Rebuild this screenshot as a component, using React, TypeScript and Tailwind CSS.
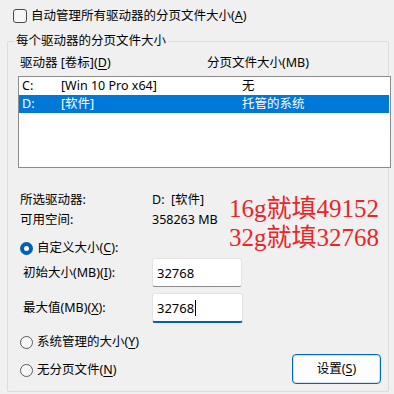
import React from "react";

const ui = { fontFamily: '"Noto Sans", "Noto Sans CJK SC", sans-serif' };
const red = { fontFamily: '"Liberation Serif", "Noto Sans CJK SC", serif' };

function Key({ k }: { k: string }) {
  return (
    <>
      (<span className="underline underline-offset-2">{k}</span>)
    </>
  );
}

function Radio({ checked, children }: { checked?: boolean; children: React.ReactNode }) {
  return (
    <div className="flex h-[20px] items-center gap-[4px]">
      {checked ? (
        <span className="flex h-[13px] w-[13px] items-center justify-center rounded-full bg-[#005fb8]">
          <span className="h-[5px] w-[5px] rounded-full bg-white" />
        </span>
      ) : (
        <span className="h-[13px] w-[13px] rounded-full border border-[#5a5a5a] bg-[#f7f7f7]" />
      )}
      <span>{children}</span>
    </div>
  );
}

export default function App() {
  return (
    <div
      className="relative h-[394px] w-[394px] overflow-hidden bg-[#f0f0f0] text-[12.5px] leading-[16px] text-black"
      style={ui}
    >
      {/* top checkbox */}
      <div className="flex h-[33px] items-center gap-[4px] pb-[1px] pl-[13px]">
        <span className="h-[14px] w-[14px] rounded-[3px] border border-[#4a4a4a] bg-[#f6f6f6]" />
        <span>
          自动管理所有驱动器的分页文件大小<Key k="A" />
        </span>
      </div>

      <fieldset className="ml-[7px] h-[359px] w-[382px] min-w-0 rounded-[2px] border border-[#dcdcdc]">
        <legend className="ml-[6px] px-[2px] leading-[16px]">每个驱动器的分页文件大小</legend>

        <div className="mt-[6px] flex h-[16px] pl-[12px]">
          <span className="w-[187px]">
            驱动器 [卷标]<Key k="D" />
          </span>
          <span>分页文件大小(MB)</span>
        </div>

        <div className="ml-[10px] mt-[5px] h-[92px] w-[373px] border border-[#8b8b8b] bg-white">
          <div className="flex h-[18px] items-center pl-[3px]">
            <span className="w-[39px]">C:</span>
            <span className="w-[181px]">[Win 10 Pro x64]</span>
            <span>无</span>
          </div>
          <div className="mr-[1px] flex h-[18px] items-center bg-[#0078d7] pl-[3px] text-white">
            <span className="w-[39px]">D:</span>
            <span className="w-[181px]">[软件]</span>
            <span>托管的系统</span>
          </div>
        </div>

        <div className="mt-[22px] pl-[12px]">
          <div className="flex h-[20px] items-center">
            <span className="w-[132px]">所选驱动器:</span>
            <span>D:&nbsp;&nbsp;[软件]</span>
          </div>
          <div className="flex h-[20px] items-center">
            <span className="w-[132px]">可用空间:</span>
            <span>358263 MB</span>
          </div>
        </div>

        <div className="mt-[8px] pl-[12px]">
          <Radio checked>
            自定义大小<Key k="C" />:
          </Radio>
        </div>

        <div className="flex h-[29px] items-center pl-[15px]">
          <span className="w-[129px]">
            初始大小(MB)<Key k="I" />:
          </span>
          <div className="flex h-[29px] w-[90px] items-center rounded-[3px] border border-[#e3e3e3] border-b-[#8a8a8a] bg-white pl-[4px] text-[13px]">
            32768
          </div>
        </div>

        <div className="mt-[6px] flex h-[30px] items-center pl-[15px]">
          <span className="w-[129px]">
            最大值(MB)<Key k="X" />:
          </span>
          <div className="flex h-[30px] w-[91px] items-center rounded-[3px] border border-[#e3e3e3] border-b-2 border-b-[#005fb8] bg-white pl-[4px] text-[13px]">
            32768
            <span className="ml-[1px] h-[16px] w-[1px] bg-black" />
          </div>
        </div>

        <div className="mt-[9px] pl-[12px]">
          <Radio>
            系统管理的大小<Key k="Y" />
          </Radio>
        </div>

        <div className="mt-[2px] flex h-[30px] items-center justify-between pl-[12px] pr-[7px]">
          <div className="mt-[2px]">
            <Radio>
              无分页文件<Key k="N" />
            </Radio>
          </div>
          <button className="flex h-[30px] w-[89px] items-center justify-center rounded-[4px] border border-[#0067c0] bg-[#fdfdfd] shadow-[inset_0_0_0_1px_#cfe3f5]">
            设置<Key k="S" />
          </button>
        </div>
      </fieldset>

      {/* red annotation overlay */}
      <div
        className="absolute left-[229px] top-[194px] text-[25px] leading-[29px] text-[#e8262a]"
        style={red}
      >
        <div>16g就填49152</div>
        <div>32g就填32768</div>
      </div>
    </div>
  );
}
